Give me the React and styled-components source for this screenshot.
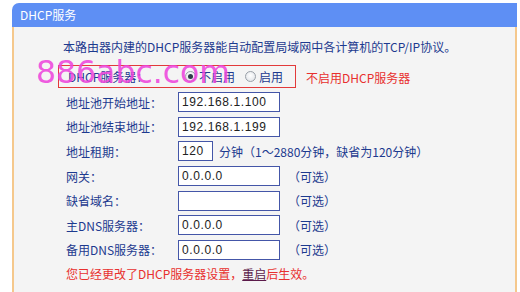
import React from "react";
import styled, { createGlobalStyle } from "styled-components";

const Global = createGlobalStyle`
  html, body { margin: 0; padding: 0; background: #ffffff; }
  body { font-family: "Noto Sans CJK SC", "Noto Sans", sans-serif; font-size: 12px; }
`;

const Frame = styled.div`
  width: 520px;
  height: 292px;
  padding: 3px 3px 0 12px;
  box-sizing: border-box;
  display: flex;
  flex-direction: column;
  overflow: hidden;
`;

const TitleBar = styled.div`
  height: 24px;
  background: #5e8ff4;
  border-radius: 7px 0 0 0;
  color: #ffffff;
  font-size: 12px;
  line-height: 24px;
  padding-left: 8px;
  flex: none;
`;

const Panel = styled.div`
  flex: 1;
  background: #f4f4f4;
  border-left: 2px solid #f5c88c;
  border-right: 2px solid #f5c88c;
  padding: 8px 0 0 49px;
  position: relative;
  color: #1d3a8f;
`;

const Intro = styled.div`
  height: 24px;
  line-height: 24px;
  font-size: 12px;
  margin-bottom: 6px;
`;

const Row = styled.div`
  display: flex;
  align-items: center;
  height: 24.6px;
  padding-left: 3px;
`;

const BoxedRow = styled.div`
  display: flex;
  align-items: center;
  height: 23px;
  margin-left: -5px;
  width: 238px;
  box-sizing: border-box;
  border: 1px solid #e23a3a;
  padding-left: 9px;
  margin-bottom: 2px;
`;

const BoxedLine = styled.div`
  display: flex;
  align-items: center;
`;

const Label = styled.span`
  width: ${(p) => p.$w || 112}px;
  flex: none;
  white-space: nowrap;
`;

const Input = styled.div`
  width: ${(p) => p.$w || 102}px;
  height: 20px;
  box-sizing: border-box;
  border: 1px solid #4456a8;
  background: #ffffff;
  color: #222;
  font-family: "Liberation Sans", sans-serif;
  font-size: 12px;
  letter-spacing: 0.6px;
  line-height: 18px;
  padding-left: 3px;
  flex: none;
`;

const Hint = styled.span`
  margin-left: ${(p) => p.$ml || 8}px;
  white-space: nowrap;
`;

const Radio = styled.span`
  width: 11px;
  height: 11px;
  border-radius: 50%;
  box-sizing: border-box;
  border: 1px solid #9aa0a8;
  background: radial-gradient(circle at 50% 40%, #ffffff, #dcdfe4);
  display: inline-flex;
  align-items: center;
  justify-content: center;
  margin-right: 3px;
  flex: none;
  &::after {
    content: "";
    width: 5px;
    height: 5px;
    border-radius: 50%;
    background: ${(p) => (p.$on ? "#2e3a48" : "transparent")};
  }
`;

const Option = styled.span`
  display: inline-flex;
  align-items: center;
  margin-right: 10px;
  white-space: nowrap;
`;

const RedNote = styled.span`
  color: #e8302e;
  margin-left: 10px;
  white-space: nowrap;
`;

const Message = styled.div`
  height: 24px;
  line-height: 24px;
  padding-left: 3px;
  color: #e8302e;
`;

const Restart = styled.span`
  color: #5b1a4a;
  text-decoration: underline;
`;

const Watermark = styled.div`
  position: absolute;
  left: 22px;
  top: 27px;
  font-family: "DejaVu Sans", sans-serif;
  font-size: 31.5px;
  line-height: 36px;
  color: rgba(238, 70, 220, 0.9);
  pointer-events: none;
  white-space: nowrap;
`;

const fields = [
  { label: "地址池开始地址：", value: "192.168.1.100" },
  { label: "地址池结束地址：", value: "192.168.1.199" },
];

const optional = [
  { label: "网关：", value: "0.0.0.0" },
  { label: "缺省域名：", value: "" },
  { label: "主DNS服务器：", value: "0.0.0.0" },
  { label: "备用DNS服务器：", value: "0.0.0.0" },
];

export default function App() {
  return (
    <>
      <Global />
      <Frame>
        <TitleBar>DHCP服务</TitleBar>
        <Panel>
          <Intro>本路由器内建的DHCP服务器能自动配置局域网中各计算机的TCP/IP协议。</Intro>
          <BoxedLine>
            <BoxedRow>
              <Label $w={117}>DHCP服务器：</Label>
              <Option>
                <Radio $on />
                不启用
              </Option>
              <Option>
                <Radio />
                启用
              </Option>
            </BoxedRow>
            <RedNote>不启用DHCP服务器</RedNote>
          </BoxedLine>
          {fields.map((f) => (
            <Row key={f.label}>
              <Label>{f.label}</Label>
              <Input>{f.value}</Input>
            </Row>
          ))}
          <Row>
            <Label>地址租期：</Label>
            <Input $w={35}>120</Input>
            <Hint $ml={6}>分钟（1～2880分钟，缺省为120分钟）</Hint>
          </Row>
          {optional.map((f) => (
            <Row key={f.label}>
              <Label>{f.label}</Label>
              <Input>{f.value}</Input>
              <Hint>（可选）</Hint>
            </Row>
          ))}
          <Message>
            您已经更改了DHCP服务器设置，<Restart>重启</Restart>后生效。
          </Message>
          <Watermark>886abc.com</Watermark>
        </Panel>
      </Frame>
    </>
  );
}
